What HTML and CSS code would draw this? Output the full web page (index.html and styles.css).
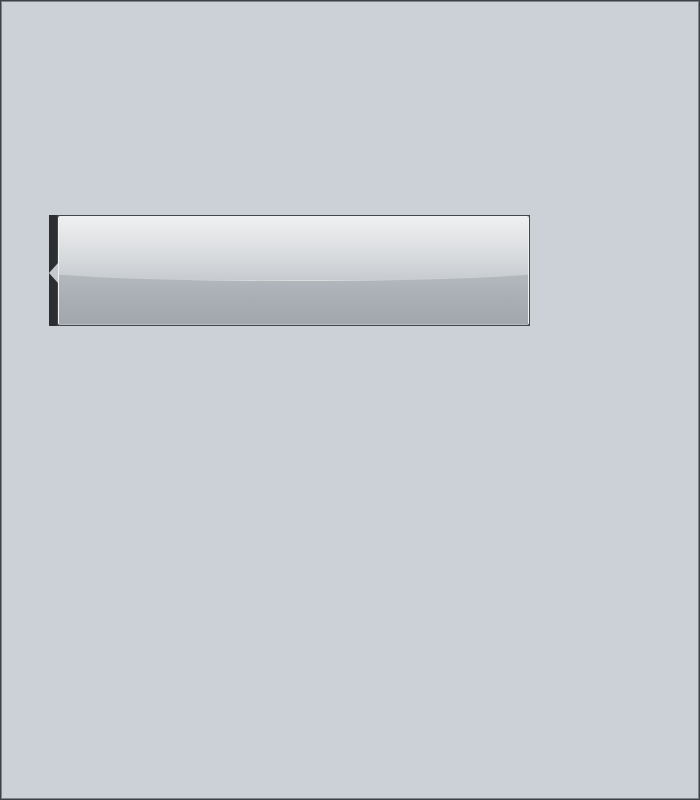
FILE: index.html
```html
<!DOCTYPE html>
<html>
<head>
<meta charset="utf-8">
<link rel="stylesheet" href="styles.css">
</head>
<body>
<div class="frame">
  <div class="widget">
    <div class="marker"></div>
    <div class="panel"><div class="panel-inner"></div></div>
  </div>
</div>
</body>
</html>
```
FILE: styles.css
```css
html, body {
  margin: 0;
  padding: 0;
  background: #ccd1d8;
}
.frame {
  box-sizing: border-box;
  width: 700px;
  height: 800px;
  border: 1px solid #3b4148;
  box-shadow: inset 1px 1px 0 #7d848c, inset -1px -1px 0 #7d848c;
  background: #ccd1d8;
  padding: 214px 0 0 48px;
}
.widget {
  display: flex;
  width: 481px;
  height: 111px;
  position: relative;
}
.marker {
  width: 8px;
  background: #2c2e31;
  position: relative;
}
.marker::after {
  content: "";
  position: absolute;
  left: 0;
  top: 48px;
  width: 9px;
  height: 20px;
  background: #c6cacf;
  clip-path: polygon(0 50%, 100% 0, 100% 100%);
}
.panel {
  flex: 1;
  box-sizing: border-box;
  border: 1px solid #43474c;
  background: #3f4348;
}
.panel-inner {
  box-sizing: border-box;
  height: 100%;
  position: relative;
  overflow: hidden;
  border-radius: 2px;
  border: 1px solid #f0f1f2;
  border-bottom-color: #b7bcc1;
  background: linear-gradient(to bottom, #b8bdc2 0%, #b3b8bd 55%, #a8adb3 80%, #a1a7ad 100%);
}
.panel-inner::before {
  content: "";
  position: absolute;
  left: -10%;
  width: 120%;
  top: -1px;
  height: 64px;
  border-radius: 0 0 50% 50% / 0 0 14px 14px;
  border-bottom: 1px solid rgba(205, 209, 213, 0.6);
  background: linear-gradient(to bottom, #eef0f1 0%, #e2e4e6 35%, #d3d6d9 75%, #c7cbcf 100%);
}
```
